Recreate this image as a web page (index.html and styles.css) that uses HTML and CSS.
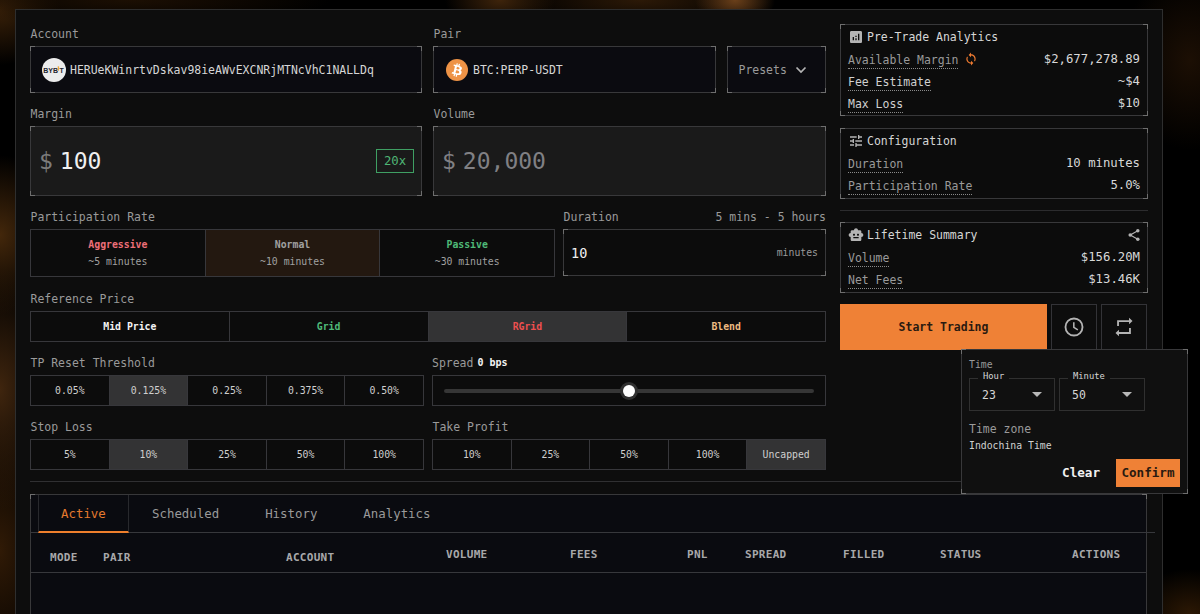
FILE: index.html
```
<!DOCTYPE html>
<html lang="en">
<head>
<meta charset="utf-8">
<title>Trading</title>
<link rel="stylesheet" href="styles.css">
</head>
<body>
<div class="panel">
  <div class="top">
    <main class="form">
      <div class="row">
        <div class="field w-account">
          <div class="label">Account</div>
          <div class="box corners select">
            <svg class="coin-bybit" viewBox="0 0 24 24"><circle cx="12" cy="12" r="12" fill="#ececec"/><text x="1.3" y="15" class="bybit-text">BYB</text><rect x="15.7" y="8.3" width="1.4" height="4.4" fill="#f0a93a"/><text x="17.4" y="15" class="bybit-text">T</text></svg>
            <span>HERUeKWinrtvDskav98ieAWvEXCNRjMTNcVhC1NALLDq</span>
          </div>
        </div>
        <div class="field w-pair">
          <div class="label">Pair</div>
          <div class="pair-row">
            <div class="box corners select pair">
              <svg class="coin-btc" viewBox="0 0 32 32"><circle cx="16" cy="16" r="16" fill="#ee9346"/><path fill="#fff" d="M23.2 14c.3-2.100-1.300-3.200-3.500-4l.7-2.800-1.700-.4-.7 2.700-1.400-.3.700-2.700-1.700-.5-.7 2.900-3.500-.9-.5 1.900s1.300.3 1.200.3c.7.200.8.600.8 1l-1.900 7.700c-.1.200-.3.500-.8.400l-1.200-.3-.9 2 3.400.9-.7 2.900 1.700.4.700-2.800 1.400.3-.7 2.900 1.700.4.7-2.900c3 .6 5.200.4 6.100-2.300.8-2.200 0-3.500-1.600-4.300 1.200-.3 2-1.100 2.300-2.700zm-4 5.600c-.5 2.200-4.200 1-5.400.7l1-3.900c1.200.3 5 .9 4.400 3.200zm.5-5.700c-.5 2-3.600 1-4.600.7l.9-3.500c1 .3 4.200.7 3.700 2.800z"/></svg>
              <span>BTC:PERP-USDT</span>
            </div>
            <div class="box corners presets">
              <span>Presets</span>
              <svg class="chev" viewBox="0 0 12 8"><path d="M1.500 1.500 6 6l4.500-4.500" fill="none" stroke="#b5b5b5" stroke-width="1.700"/></svg>
            </div>
          </div>
        </div>
      </div>

      <div class="row">
        <div class="field w-account">
          <div class="label">Margin</div>
          <div class="box corners amount"><span class="dollar">$</span><span class="value">100</span><span class="leverage">20x</span></div>
        </div>
        <div class="field w-pair">
          <div class="label">Volume</div>
          <div class="box corners amount muted"><span class="dollar">$</span><span class="value">20,000</span></div>
        </div>
      </div>

      <div class="row row-rate">
        <div class="field w-rate">
          <div class="label">Participation Rate</div>
          <div class="group rate">
            <div class="opt"><b class="rose">Aggressive</b><span>~5 minutes</span></div>
            <div class="opt brown"><b>Normal</b><span>~10 minutes</span></div>
            <div class="opt"><b class="green">Passive</b><span>~30 minutes</span></div>
          </div>
        </div>
        <div class="field grow">
          <div class="label split"><span>Duration</span><span>5 mins - 5 hours</span></div>
          <div class="box corners duration"><span class="num">10</span><span class="unit">minutes</span></div>
        </div>
      </div>

      <div class="field">
        <div class="label">Reference Price</div>
        <div class="group bold">
          <div class="opt white">Mid Price</div>
          <div class="opt green">Grid</div>
          <div class="opt on red">RGrid</div>
          <div class="opt sand">Blend</div>
        </div>
      </div>

      <div class="row row-half">
        <div class="field">
          <div class="label">TP Reset Threshold</div>
          <div class="group">
            <div class="opt">0.05%</div><div class="opt on">0.125%</div><div class="opt">0.25%</div><div class="opt">0.375%</div><div class="opt">0.50%</div>
          </div>
        </div>
        <div class="field">
          <div class="label spread"><span>Spread</span><b class="bps">0 bps</b></div>
          <div class="group slider"><div class="track"><i class="thumb"></i></div></div>
        </div>
      </div>

      <div class="row row-half">
        <div class="field">
          <div class="label">Stop Loss</div>
          <div class="group">
            <div class="opt">5%</div><div class="opt on">10%</div><div class="opt">25%</div><div class="opt">50%</div><div class="opt">100%</div>
          </div>
        </div>
        <div class="field">
          <div class="label">Take Profit</div>
          <div class="group">
            <div class="opt">10%</div><div class="opt">25%</div><div class="opt">50%</div><div class="opt">100%</div><div class="opt on">Uncapped</div>
          </div>
        </div>
      </div>
    </main>

    <aside class="side">
      <section class="card corners analytics">
        <div class="card-head">
          <svg class="ic" viewBox="0 0 24 24"><path fill="#b4b4b4" d="M19 3H5c-1.100 0-2 .9-2 2v14c0 1.100.9 2 2 2h14c1.100 0 2-.9 2-2V5c0-1.100-.9-2-2-2zM9 17H7v-5h2v5zm4 0h-2v-3h2v3zm0-5h-2v-2h2v2zm4 5h-2V7h2v10z"/></svg>
          <span>Pre-Trade Analytics</span>
        </div>
        <div class="stat"><span class="key">Available Margin</span><svg class="sync" viewBox="0 0 24 24"><path fill="#ee7a30" d="M12 4V1L8 5l4 4V6c3.310 0 6 2.690 6 6 0 1.010-.25 1.970-.7 2.800l1.460 1.460C19.540 15.030 20 13.570 20 12c0-4.420-3.580-8-8-8zm0 14c-3.310 0-6-2.690-6-6 0-1.010.25-1.970.7-2.800L5.240 7.740C4.460 8.970 4 10.430 4 12c0 4.420 3.580 8 8 8v3l4-4-4-4v3z"/></svg><span class="val">$2,677,278.89</span></div>
        <div class="stat"><span class="key light">Fee Estimate</span><span class="val">~$4</span></div>
        <div class="stat"><span class="key light">Max Loss</span><span class="val">$10</span></div>
      </section>
      <section class="card corners config">
        <div class="card-head">
          <svg class="ic" viewBox="0 0 24 24"><path fill="#b4b4b4" d="M3 17v2h6v-2H3zM3 5v2h10V5H3zm10 16v-2h8v-2h-8v-2h-2v6h2zM7 9v2H3v2h4v2h2V9H7zm14 4v-2H11v2h10zm-6-4h2V7h4V5h-4V3h-2v6z"/></svg>
          <span>Configuration</span>
        </div>
        <div class="stat"><span class="key">Duration</span><span class="val">10 minutes</span></div>
        <div class="stat"><span class="key">Participation Rate</span><span class="val">5.0%</span></div>
      </section>
      <div class="side-rule"></div>
      <section class="card corners lifetime">
        <div class="card-head">
          <svg class="ic" viewBox="0 0 24 24"><path fill="#b4b4b4" d="M20 9V7c0-1.100-.9-2-2-2h-3c0-1.660-1.340-3-3-3S9 3.340 9 5H6c-1.100 0-2 .9-2 2v2c-1.660 0-3 1.340-3 3s1.340 3 3 3v4c0 1.100.9 2 2 2h12c1.100 0 2-.9 2-2v-4c1.660 0 3-1.340 3-3s-1.340-3-3-3zM7.500 11.500c0-.83.670-1.500 1.500-1.500s1.500.670 1.500 1.500S9.830 13 9 13s-1.500-.670-1.500-1.500zM16 17H8v-2h8v2zm-1-4c-.83 0-1.500-.670-1.500-1.500S14.170 10 15 10s1.500.670 1.500 1.500S15.830 13 15 13z"/></svg>
          <span>Lifetime Summary</span>
          <svg class="share" viewBox="0 0 24 24"><g fill="#b4b4b4"><circle cx="18.500" cy="4.800" r="3"/><circle cx="5.500" cy="12" r="3"/><circle cx="18.500" cy="19.200" r="3"/></g><path d="M18.500 4.800 5.500 12l13 7.200" fill="none" stroke="#b4b4b4" stroke-width="2"/></svg>
        </div>
        <div class="stat"><span class="key">Volume</span><span class="val">$156.20M</span></div>
        <div class="stat"><span class="key">Net Fees</span><span class="val">$13.46K</span></div>
      </section>
      <div class="actions">
        <div class="start">Start Trading</div>
        <div class="icon-btn"><svg viewBox="0 0 24 24"><circle cx="12" cy="12" r="9.300" fill="none" stroke="#b4b4b4" stroke-width="2"/><path d="M11.800 6.800v5.600l4.400 2.800" fill="none" stroke="#b4b4b4" stroke-width="1.700"/></svg></div>
        <div class="icon-btn"><svg viewBox="0 0 24 24"><path fill="#b4b4b4" d="M6.500 6.500h11v2.500l3.800-3.500-3.800-3.500v2.500H4.500v6.500h2zM17.500 17.500h-11v-2.500l-3.800 3.500 3.800 3.500v-2.500h13v-6.500h-2z"/></svg></div>
        <div class="popover corners">
          <div class="pop-title">Time</div>
          <div class="selects">
            <div class="mini"><span class="legend">Hour</span><span>23</span><i class="caret"></i></div>
            <div class="mini"><span class="legend">Minute</span><span>50</span><i class="caret"></i></div>
          </div>
          <div class="zone-label">Time zone</div>
          <div class="zone">Indochina Time</div>
          <div class="pop-actions"><span class="clear">Clear</span><span class="confirm">Confirm</span></div>
        </div>
      </div>
    </aside>
  </div>

  <div class="rule"></div>

  <section class="orders corners">
    <nav class="tabs">
      <span class="tab active">Active</span><span class="tab">Scheduled</span><span class="tab">History</span><span class="tab">Analytics</span>
    </nav>
    <div class="thead">
      <span class="low">MODE</span><span class="low">PAIR</span><span class="low">ACCOUNT</span><span>VOLUME</span><span>FEES</span><span>PNL</span><span>SPREAD</span><span>FILLED</span><span>STATUS</span><span>ACTIONS</span>
    </div>
  </section>
</div>
</body>
</html>
```

FILE: styles.css
```
* { box-sizing: border-box; }

body {
  margin: 0;
  height: 614px;
  overflow: hidden;
  padding: 9px 0 0 15px;
  font-family: "DejaVu Sans Mono", "Liberation Mono", monospace;
  font-size: 11.48px;
  color: #9a9a9a;
  background:
    radial-gradient(ellipse 55px 30px at 500px 0, #3e240b, transparent),
    radial-gradient(ellipse 40px 26px at 735px 0, #6b401a, transparent),
    radial-gradient(ellipse 130px 30px at 640px 0, #2c1907, transparent),
    radial-gradient(ellipse 200px 26px at 130px 0, #1c0f03, transparent),
    radial-gradient(ellipse 60px 55px at 0 10px, #382008, transparent),
    radial-gradient(ellipse 60px 80px at 0 235px, #43270b, transparent),
    radial-gradient(ellipse 60px 120px at 0 390px, #3f250e, transparent),
    radial-gradient(ellipse 60px 130px at 0 550px, #301a06, transparent),
    radial-gradient(ellipse 70px 90px at 1190px 60px, #1c0f04, transparent),
    radial-gradient(ellipse 60px 45px at 1190px 614px, #2c1804, transparent),
    #000;
}

/* Light accents on the four corners of a bordered box */
.corners { position: relative; border: 1px solid #38383a; }
.corners::after {
  content: "";
  position: absolute;
  inset: -1px;
  pointer-events: none;
  --c: #6e6e6e;
  background:
    linear-gradient(var(--c), var(--c)) 0 0 / 5px 1px,
    linear-gradient(var(--c), var(--c)) 0 0 / 1px 5px,
    linear-gradient(var(--c), var(--c)) 100% 0 / 5px 1px,
    linear-gradient(var(--c), var(--c)) 100% 0 / 1px 5px,
    linear-gradient(var(--c), var(--c)) 0 100% / 5px 1px,
    linear-gradient(var(--c), var(--c)) 0 100% / 1px 5px,
    linear-gradient(var(--c), var(--c)) 100% 100% / 5px 1px,
    linear-gradient(var(--c), var(--c)) 100% 100% / 1px 5px;
  background-repeat: no-repeat;
}

.panel {
  width: 1148px;
  height: 605px;
  padding: 14px 14px 0;
  border: 1px solid #2e2e2e;
  border-bottom: 0;
  background: #0d0d0d;
}
.top { display: flex; gap: 14px; height: 457px; }
.form { width: 796px; padding-top: 2px; display: flex; flex-direction: column; gap: 13px; }
.row { display: flex; gap: 11px; }
.w-account { width: 392px; }
.w-pair { width: 393px; }
.label { height: 16px; line-height: 16px; margin-bottom: 4px; padding-left: 0.5px; white-space: nowrap; }
.split { display: flex; justify-content: space-between; }
.spread { display: flex; gap: 4px; padding-left: 0; }

.box { display: flex; align-items: center; height: 47px; background: #0b0b10; }
.select { color: #d6d6d6; padding-left: 11px; gap: 4px; }
.coin-bybit { width: 24px; height: 24px; }
.bybit-text { font: bold 7px "Liberation Sans", sans-serif; fill: #23262f; }
.coin-btc { width: 22px; height: 22px; margin: 0 1px; }
.pair-row { display: flex; gap: 11px; }
.pair { width: 283px; }
.presets { width: 99px; padding-left: 10.5px; gap: 8px; }
.chev { width: 12px; height: 8px; }

.amount { height: 70px; background: #1a1a1a; font-size: 23px; padding: 0 7px 0 8px; gap: 7px; }
.dollar { color: #7c7c7c; }
.value { color: #f0f0f0; }
.muted .dollar, .muted .value { color: #808084; }
.leverage {
  margin-left: auto;
  width: 38px;
  height: 24px;
  border: 1px solid #3f9f63;
  color: #4fb575;
  font-size: 12.3px;
  line-height: 23px;
  text-align: center;
}

.row-rate { gap: 8px; height: 69px; }
.w-rate { width: 525px; }
.grow { flex: 1; }
.duration { padding: 0 7px; justify-content: space-between; background: #0c0c0c; }
.num { color: #f0f0f0; font-size: 13.5px; }
.unit { font-size: 9.8px; }

.group { display: flex; height: 31px; border: 1px solid #37373b; font-size: 9.8px; color: #cfcfcf; background: #0c0c0c; }
.opt { flex: 1; display: flex; align-items: center; justify-content: center; }
.opt + .opt { border-left: 1px solid #37373b; }
.on { background: #333334; }
.bold { font-weight: bold; }
.rate { height: 48px; color: #a0a0a0; }
.rate .opt { flex-direction: column; gap: 5px; line-height: 12px; padding-top: 1px; }
.brown { background: #231810; }
.white { color: #f4f4f4; }
.green { color: #4fba78; }
.red { color: #ee4f4f; }
.rose { color: #ee6f78; }
.sand { color: #edba82; }

.row-half { gap: 8px; }
.row-half > .field { flex: 1; }
.bps { font-size: 10px; color: #f4f4f4; }
.slider { padding: 0 11px; align-items: center; }
.track { flex: 1; height: 4px; border-radius: 2px; background: #363636; display: flex; align-items: center; justify-content: center; }
.thumb { width: 12px; height: 12px; border-radius: 50%; background: #fff; box-shadow: 0 0 0 3px #303030; }

.side { width: 308px; display: flex; flex-direction: column; }
.card { padding: 2px 7px 0; background: #0c0c0c; }
.analytics { height: 92px; }
.config { height: 71px; margin-top: 12px; }
.lifetime { height: 71px; }
.side-rule { height: 1px; background: #2c2c2e; margin: 11px 0; }
.card-head { display: flex; align-items: center; height: 20px; margin-bottom: 2px; color: #d6d6d6; gap: 3px; }
.ic { width: 16px; height: 16px; }
.share { width: 14px; height: 14px; margin-left: auto; margin-right: -1px; }
.stat { display: flex; align-items: flex-start; height: 22px; }
.key { border-bottom: 1.5px dotted #8a8a8a; height: 20px; line-height: 22px; }
.light { color: #d0d0d0; }
.val { margin-left: auto; font-size: 12.3px; line-height: 20px; color: #d8d8d8; }
.sync { width: 14px; height: 14px; margin: 3px 0 0 6px; }

.actions { position: relative; display: flex; gap: 4px; margin-top: 11px; height: 46px; }
.start { width: 207px; background: #ef8136; color: #2a1a10; font-weight: bold; display: flex; align-items: center; justify-content: center; }
.icon-btn { width: 46px; border: 1px solid #333337; display: flex; align-items: center; justify-content: center; }
.icon-btn svg { width: 22px; height: 22px; }

.popover { position: absolute; left: 121px; top: 45px; width: 227px; height: 145px; background: #101010; padding: 9px 7px 0; z-index: 2; }
.pop-title { font-size: 9.8px; line-height: 12px; }
.selects { display: flex; gap: 4px; margin-top: 7px; }
.mini { position: relative; width: 86px; height: 33px; border: 1px solid #303030; padding: 0 12px; display: flex; align-items: center; justify-content: space-between; color: #d6d6d6; }
.legend { position: absolute; left: 8px; top: -9px; padding: 0 5px; background: #101010; font-size: 8.8px; line-height: 12px; }
.caret { border: 5px solid transparent; border-top-color: #b8b8b8; border-bottom: 0; }
.zone-label { margin-top: 10px; line-height: 16px; }
.zone { font-size: 9.8px; line-height: 18px; color: #d0d0d0; }
.pop-actions { display: flex; justify-content: flex-end; gap: 16px; margin-top: 4px; font-weight: bold; font-size: 12.6px; line-height: 28px; }
.clear { color: #f0f0f0; }
.confirm { width: 64px; text-align: center; background: #ef8136; color: #2a1a10; }

.rule { height: 1px; background: #303032; margin-bottom: 12px; }
.orders { height: 120px; width: 1117px; background: #0a0b10; border-bottom: 0; }
.orders::after { bottom: -6px; }
.tabs { display: flex; width: 1124px; height: 38px; padding-left: 7px; border-bottom: 1px solid #37383c; font-size: 12.4px; }
.tab { line-height: 38px; padding: 0 23px; }
.active { width: 91px; padding: 0 22px; height: 38px; border: 1px solid #28292d; border-width: 0 1px 2px; border-bottom-color: #ef7f2c; color: #e57a2e; }
.thead {
  display: grid;
  grid-template-columns: 53px 183px 160px 124px 117px 58px 98px 97px 132px auto;
  height: 40px;
  padding-left: 19px;
  border-bottom: 1px solid #37383c;
  font-weight: bold;
  font-size: 11px;
  letter-spacing: 0.3px;
  line-height: 43px;
  color: #a8a8aa;
}
.low { padding-top: 3px; }
```
